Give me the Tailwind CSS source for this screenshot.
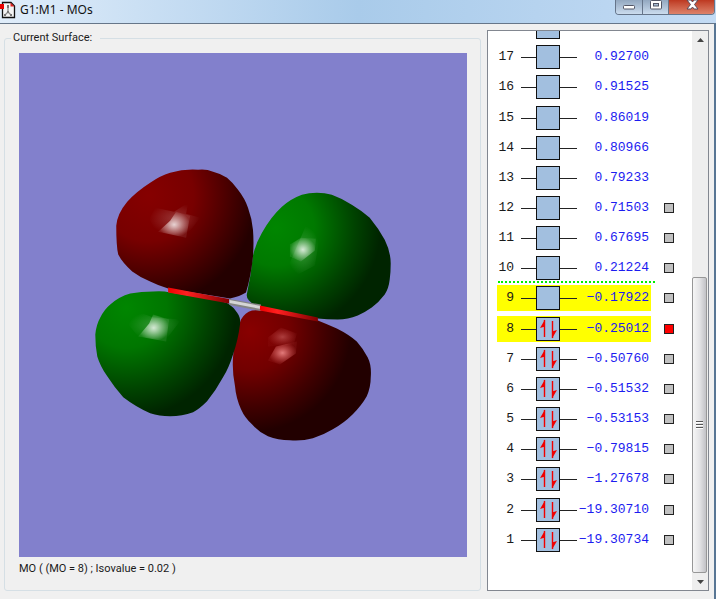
<!DOCTYPE html>
<html lang="en">
<head>
<meta charset="utf-8">
<title>G1:M1 - MOs</title>
<script src="https://cdn.jsdelivr.net/npm/@tailwindcss/browser@4"></script>
</head>
<body class="flex h-screen min-h-[320px] flex-col overflow-hidden bg-[#b4d0ee] font-['Liberation_Sans',sans-serif] text-[#1a1a1a]">
<header class="flex h-[23px] shrink-0 items-start justify-between bg-linear-to-r from-[#e0edfa] via-[#a9cbea] to-[#c3dbf4]">
  <div class="flex h-5 items-center gap-1">
    <svg class="h-5 w-4" viewBox="0 0 16 20" aria-hidden="true">
      <path d="M2.500 2.500h8.500l3.500 3.500v11.500h-12z" fill="#f4f4f4" stroke="#111" stroke-width="1.300"/>
      <path d="M10.500 2.500v4h4z" fill="#d22"/>
      <path d="M8 6v6M8 12l-3.500 3.500M8 12l3.500 3.500" stroke="#8a8a8a" stroke-width="1.300" fill="none"/>
      <path d="M7 5h2v3h-2zM4 14h2v2H4zM10 14h2v2h-2zM7 11h2v2H7z" fill="#777"/>
      <path d="M0 4h4v5H0z" fill="#e80000"/>
    </svg>
    <h1 class="font-['Noto_Sans',sans-serif] text-xs leading-5 text-[#111]">G1:M1 - MOs</h1>
  </div>
  <div class="mr-px flex h-[15px] overflow-hidden rounded-b-[4px] border border-t-0 border-[#66758a]">
    <button type="button" aria-label="Minimize" class="flex w-[27px] justify-center border-r border-[#66758a] bg-linear-to-b from-[#93a8c0] to-[#cbdcee]">
      <svg class="h-[14px] w-4" viewBox="0 0 16 14"><rect x="2.500" y="5.500" width="11" height="3.500" rx="1" fill="#fff" stroke="#535666"/></svg>
    </button>
    <button type="button" aria-label="Maximize" class="flex w-[26px] justify-center border-r border-[#66758a] bg-linear-to-b from-[#93a8c0] to-[#cbdcee]">
      <svg class="h-[14px] w-4" viewBox="0 0 16 14"><rect x="2.500" y=".5" width="11" height="8.500" rx="1" fill="#fff" stroke="#535666"/><rect x="5.500" y="3.500" width="5" height="2.500" fill="#a8bdd4" stroke="#535666"/></svg>
    </button>
    <button type="button" aria-label="Close" class="flex w-[45px] justify-center bg-linear-to-b from-[#bd3820] to-[#dd826a]">
      <svg class="h-[14px] w-4" viewBox="0 0 16 14"><path d="M3 0h4l1.500 2L10 0h4l-3.500 4.500L14 9h-4L8.500 7 7 9H3l3.500-4.500z" fill="#fff" stroke="#5a4a58"/></svg>
    </button>
  </div>
</header>
<main class="flex min-h-0 flex-1 gap-[6px] border-t border-r-2 border-t-[#667689] border-r-[#587694] bg-[#f0f0f0] pt-[6px] pr-[5px] pb-2 pl-1">
  <fieldset class="flex min-w-0 flex-1 flex-col rounded-[3px] border border-[#d5dfe5] pr-[13px] pl-[14px]">
    <legend class="-ml-2 px-[2px] pr-2 font-[Roboto,sans-serif] text-[11px] leading-4">Current Surface:</legend>
    <svg class="mt-[7px] min-h-0 w-full flex-1 bg-[#8280cc]" viewBox="19 53 448 505" role="img" aria-label="Molecular orbital surface">
      <defs>
        <radialGradient id="r1" gradientUnits="userSpaceOnUse" cx="148" cy="196" r="114"><stop offset="0" stop-color="#860000"/><stop offset=".4" stop-color="#780000"/><stop offset=".75" stop-color="#420000"/><stop offset=".95" stop-color="#240000"/></radialGradient>
        <radialGradient id="g1" gradientUnits="userSpaceOnUse" cx="276" cy="228" r="110"><stop offset="0" stop-color="#008600"/><stop offset=".35" stop-color="#007900"/><stop offset=".72" stop-color="#004200"/><stop offset=".95" stop-color="#002400"/></radialGradient>
        <radialGradient id="g2" gradientUnits="userSpaceOnUse" cx="126" cy="308" r="116"><stop offset="0" stop-color="#008600"/><stop offset=".35" stop-color="#007600"/><stop offset=".72" stop-color="#004200"/><stop offset=".95" stop-color="#002400"/></radialGradient>
        <radialGradient id="r2" gradientUnits="userSpaceOnUse" cx="250" cy="332" r="112"><stop offset="0" stop-color="#880000"/><stop offset=".35" stop-color="#720000"/><stop offset=".68" stop-color="#400000"/><stop offset=".9" stop-color="#220000"/></radialGradient>
        <radialGradient id="hw"><stop offset="0" stop-color="#fff" stop-opacity=".8"/><stop offset=".5" stop-color="#fff" stop-opacity=".42"/><stop offset="1" stop-color="#fff" stop-opacity=".08"/></radialGradient>
        <radialGradient id="hf"><stop offset="0" stop-color="#fff" stop-opacity=".2"/><stop offset="1" stop-color="#fff" stop-opacity="0"/></radialGradient>
        <radialGradient id="hp"><stop offset="0" stop-color="#ff9a9a" stop-opacity=".8"/><stop offset="1" stop-color="#f07070" stop-opacity=".08"/></radialGradient>
        <linearGradient id="s1"><stop offset="0" stop-color="#f00000"/><stop offset=".3" stop-color="#ff2020"/><stop offset="1" stop-color="#800000"/></linearGradient>
      </defs>
      <path fill="url(#r2)" d="M241 320Q245 313 252 311Q259 310 270 312L318 321Q328 325 337 329Q349 335 357 342Q364 350 368 358Q372 366 371 378Q371 388 367 397Q362 406 353 415Q344 424 333 430Q323 436 313 439Q302 442 290 441Q278 441 268 437Q259 433 252 425Q245 419 241 410Q236 399 235 387Q232 372 233 358Q234 338 241 320Z"/>
      <path fill="url(#g1)" d="M247 294Q251 276 253 256Q256 243 262 233Q271 217 282 207Q291 199 302 195Q309 193 317 193Q325 193 332 195Q343 199 352 205Q362 211 370 218Q379 229 385 240Q391 252 391 264Q391 273 390 280Q389 289 385 295Q379 303 372 308Q365 313 358 316Q348 320 338 320Q327 320 318 319L260 307Q252 305 249 301Q246 298 247 294Z"/>
      <path fill="url(#g2)" d="M95 335Q96 325 100 318Q104 310 110 305Q119 297 130 294Q141 292 153 292Q162 291 170 293L207 299Q220 301 228 304Q234 308 237 313Q241 318 240 325Q238 341 233 355Q229 368 223 378Q216 391 207 402Q199 410 193 413Q182 417 170 417Q159 417 150 414Q136 408 123 398Q114 388 107 377Q100 367 97 357Q95 347 95 335Z"/>
      <path fill="url(#r1)" d="M116 226Q117 214 127 202Q136 192 150 183Q160 176 170 173Q184 169 198 170Q206 169 213 172Q221 174 227 178Q233 183 238 190Q245 199 248 208Q252 219 253 230Q254 243 253 257Q251 277 246 293Q240 297 230 299L168 289Q158 286 150 282Q140 278 132 272Q122 263 118 255Q116 247 116 226Z"/>
      <path fill="url(#s1)" d="M168 288L229 299.500V304L168 293Z"/>
      <path fill="#858585" d="M229.500 299.500L261 305V311.500L229.500 305.500Z"/>
      <path fill="#d6d6d6" d="M229.500 300.500L261 306.500V309.500L229.500 303.500Z"/>
      <path fill="url(#s1)" d="M260 306L318 318V322L260 311Z"/>
      <path fill="url(#hf)" d="M149 219L155 208L174 212L188 203L186 214L200 218L187 235L156 233Z"/>
      <path fill="url(#hw)" d="M158 232L170 221L176 212L190 216L186 238Z"/>
      <path fill="url(#hf)" d="M306 226L320 236L315 266L296 276L287 270Z"/>
      <path fill="url(#hw)" d="M290 245L301 238L316 239L315 251L301 262L290 257Z"/>
      <path fill="url(#hf)" d="M128 325L137 312L153 318L181 320L166 340L138 337Z"/>
      <path fill="url(#hw)" d="M138 337L149 324L153 315L169 320L166 342Z"/>
      <path fill="url(#hp)" opacity=".5" d="M268 338L281 328L297 334L294 345L268 347Z"/>
      <path fill="url(#hp)" d="M268 361L276 347L297 342L296 354L280 365Z"/>
    </svg>
    <p class="mb-[9px] py-1 font-[Roboto,sans-serif] text-[11px] leading-4">MO ( (MO = 8) ; Isovalue = 0.02 )</p>
  </fieldset>
  <section aria-label="Orbital energies" class="flex w-[222px] shrink-0 border border-[#828790] bg-white">
    <div class="flex min-w-0 flex-1 flex-col justify-end overflow-hidden pb-[35px] pl-[9px]">
      <table class="relative h-[543px] w-[177px] shrink-0 border-collapse font-['Liberation_Mono',monospace] text-[13px] leading-[26px]">
        <tbody id="levels"></tbody>
      </table>
    </div>
    <div class="flex w-4 shrink-0 flex-col bg-[#eeeeee]">
      <button type="button" aria-label="Scroll up" class="flex h-[17px] items-center justify-center"><svg class="h-1 w-[7px]" viewBox="0 0 7 4"><path d="M3.500 0L7 4H0z" fill="#444"/></svg></button>
      <div class="flex min-h-0 flex-1 flex-col">
        <div class="min-h-0 flex-[230]"></div>
        <div class="mr-px flex flex-[295] items-center justify-center rounded-[2px] border border-[#979797] bg-linear-to-r from-[#f6f6f6] via-[#e4e4e6] to-[#c2c2c6]">
          <svg class="h-2 w-[7px]" viewBox="0 0 7 8"><path d="M0 .5h7M0 3.500h7M0 6.500h7" stroke="#555"/><path d="M0 1.500h7M0 4.500h7M0 7.500h7" stroke="#fff"/></svg>
        </div>
      </div>
      <button type="button" aria-label="Scroll down" class="flex h-[17px] items-center justify-center"><svg class="h-1 w-[7px]" viewBox="0 0 7 4"><path d="M0 0h7L3.500 4z" fill="#444"/></svg></button>
    </div>
  </section>
</main>
<script>
  const energies = ['−19.30734','−19.30710','−1.27678','−0.79815','−0.53153','−0.51532','−0.50760','−0.25012','−0.17922','0.21224','0.67695','0.71503','0.79233','0.80966','0.86019','0.91525','0.92700',''];
  const arrows = '<path d="M23.500 21V4M31.500 5v17" stroke="#f00000" stroke-width="1.400"/><path d="M24 3.500v7l-5 1.500zM31 22.500v-7l5-1.500z" fill="#f00000"/>';
  let rows = '';
  for (let n = 18; n >= 1; n--) {
    const mark = n === 8 || n === 9 ? 'bg-[#ffff00]' : '';
    const divider = n === 9 ? '<div class="absolute -top-[4px] left-px w-[157px] border-t-2 border-dotted border-[#00ee00]"></div>' : '';
    const box = n <= 12 ? `<input type="checkbox" aria-label="Orbital ${n}" ${n === 8 ? 'checked' : ''} class="block size-[10px] appearance-none border border-[#222] bg-[#c0c0c0] checked:bg-[#ff0000]">` : '';
    rows += `<tr><th scope="row" class="w-6 p-0 font-normal"><div class="relative h-[26px] pr-[7px] text-right ${mark}">${divider}${n < 18 ? n : ''}</div></th>
      <td class="w-14 p-0"><div class="h-[26px] ${mark}"><svg class="h-[26px] w-14" viewBox="0 0 56 26"><path d="M0 13.500h56" stroke="#222"/><rect x="15.500" y="1.500" width="23" height="23" fill="#a2bfdf" stroke="#111"/>${n <= 8 ? arrows : ''}</svg></div></td>
      <td class="p-0"><div class="flex h-[26px] w-[74px] justify-end pr-[2px] text-[#1c1cf0] ${mark}">${energies[n - 1]}</div></td>
      <td class="w-[10px] p-0">${box}</td></tr>`;
  }
  document.getElementById('levels').innerHTML = rows;
</script>
</body>
</html>
